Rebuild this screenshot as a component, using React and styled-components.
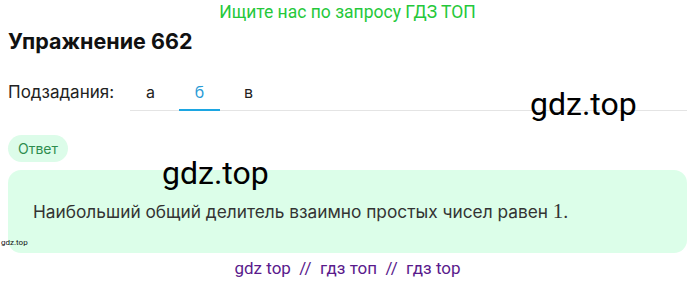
import React, { useState } from "react";
import styled, { createGlobalStyle } from "styled-components";

const Global = createGlobalStyle`
  body {
    margin: 0;
    background: #fff;
    font-family: Inter, "Noto Sans", sans-serif;
  }
`;

const tabs = ["а", "б", "в"];

export default function App() {
  const [current, setCurrent] = useState(1);
  return (
    <>
      <Global />
      <Page>
        <Banner>Ищите нас по запросу ГДЗ ТОП</Banner>
        <Title>Упражнение 662</Title>
        <SubRow>
          <SubLabel>Подзадания:</SubLabel>
          <Tabs>
            {tabs.map((t, i) => (
              <Tab key={t} active={i === current} onClick={() => setCurrent(i)}>
                {t}
              </Tab>
            ))}
          </Tabs>
          <Mark top="13px" left="522px">gdz.top</Mark>
        </SubRow>
        <Pill>Ответ</Pill>
        <AnswerBox>
          <Mark top="-13px" left="154px">gdz.top</Mark>
          <AnswerText>
            Наибольший общий делитель взаимно простых чисел равен <Num>1</Num>.
          </AnswerText>
          <SmallMark>gdz.top</SmallMark>
        </AnswerBox>
        <Footer>gdz top &nbsp;//&nbsp; гдз топ &nbsp;//&nbsp; гдз top</Footer>
      </Page>
    </>
  );
}

const Page = styled.div`
  padding: 0 8px;
  width: 695px;
  box-sizing: border-box;
`;

const Banner = styled.div`
  font-family: Roboto, sans-serif;
  font-size: 17.5px;
  color: #25c83a;
  text-align: center;
  height: 24px;
  line-height: 24px;
`;

const Title = styled.h1`
  margin: 2px 0 0;
  font-size: 21.5px;
  font-weight: 700;
  color: #111;
  line-height: 30px;
`;

const SubRow = styled.div`
  position: relative;
  display: flex;
  align-items: stretch;
  margin-top: 19px;
  height: 36px;
`;

const SubLabel = styled.div`
  font-size: 17px;
  color: #222;
  width: 122px;
  display: flex;
  align-items: center;
  padding-bottom: 2px;
`;

const Tabs = styled.div`
  flex: 1;
  display: flex;
  gap: 8px;
  border-bottom: 1px solid #e4e4e4;
`;

const Tab = styled.div`
  width: 41px;
  display: flex;
  align-items: center;
  justify-content: center;
  font-size: 16px;
  color: ${(p) => (p.active ? "#2a9bd6" : "#222")};
  border-bottom: 2px solid ${(p) => (p.active ? "#1ca6e2" : "transparent")};
  margin-bottom: -1px;
  cursor: pointer;
`;

const Mark = styled.div`
  position: absolute;
  top: ${(p) => p.top};
  left: ${(p) => p.left};
  font-family: Roboto, sans-serif;
  font-size: 32px;
  color: #000;
  line-height: 1;
  pointer-events: none;
`;

const Pill = styled.div`
  display: inline-block;
  margin-top: 24px;
  padding: 0 10px;
  height: 27px;
  line-height: 27px;
  border-radius: 14px;
  background: #dcfce9;
  color: #2e8c4e;
  font-size: 14px;
`;

const AnswerBox = styled.div`
  position: relative;
  margin-top: 8px;
  height: 83px;
  background: #dcfee9;
  border-radius: 13px;
  display: flex;
  align-items: center;
  padding-left: 25px;
`;

const AnswerText = styled.div`
  font-size: 17.3px;
  color: #333;
`;

const Num = styled.span`
  font-family: "Liberation Serif", serif;
  font-size: 21px;
`;

const SmallMark = styled.div`
  position: absolute;
  left: -7px;
  bottom: 6px;
  font-family: Roboto, sans-serif;
  font-size: 8px;
  color: #111;
`;

const Footer = styled.div`
  font-family: Roboto, sans-serif;
  font-size: 17px;
  color: #5a1a8c;
  text-align: center;
  margin-top: 4px;
  line-height: 22px;
`;
